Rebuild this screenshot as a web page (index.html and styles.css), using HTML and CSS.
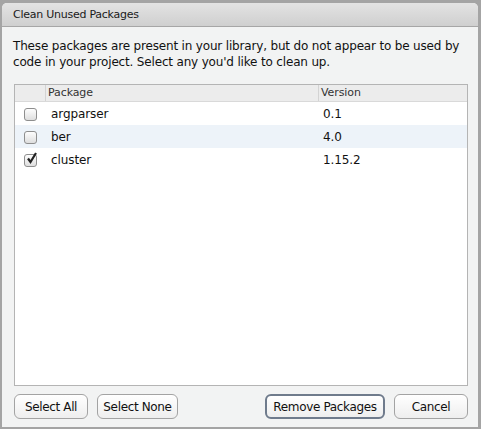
FILE: index.html
```html
<!DOCTYPE html>
<html>
<head>
<meta charset="utf-8">
<link rel="stylesheet" href="styles.css">
</head>
<body>
<div class="window">
  <div class="titlebar">Clean Unused Packages</div>
  <div class="content">
    <p class="intro">These packages are present in your library, but do not appear to be used by code in your project. Select any you'd like to clean up.</p>
    <div class="table">
      <div class="row head">
        <div class="cell chk"></div>
        <div class="cell name">Package</div>
        <div class="cell ver">Version</div>
      </div>
      <div class="row">
        <div class="cell chk"><span class="box"></span></div>
        <div class="cell name">argparser</div>
        <div class="cell ver">0.1</div>
      </div>
      <div class="row alt">
        <div class="cell chk"><span class="box"></span></div>
        <div class="cell name">ber</div>
        <div class="cell ver">4.0</div>
      </div>
      <div class="row">
        <div class="cell chk"><span class="box checked"><svg width="14" height="14" viewBox="0 0 14 14"><path d="M3 6.5 L5.5 10 L11 1" fill="none" stroke="#222" stroke-width="2.2"/></svg></span></div>
        <div class="cell name">cluster</div>
        <div class="cell ver">1.15.2</div>
      </div>
    </div>
    <div class="buttons">
      <div class="left">
        <button class="btn">Select All</button>
        <button class="btn">Select None</button>
      </div>
      <div class="right">
        <button class="btn default">Remove Packages</button>
        <button class="btn">Cancel</button>
      </div>
    </div>
  </div>
</div>
</body>
</html>
```
FILE: styles.css
```css
html, body {
  margin: 0;
  padding: 0;
}
body {
  background: #a4a4a4;
  width: 481px;
  height: 429px;
  overflow: hidden;
  font-family: "DejaVu Sans", sans-serif;
  color: #111;
}
.window {
  margin: 3px 3px 0 2px;
  width: 476px;
  height: 424px;
  background: #f2f3f3;
  border-radius: 5px 5px 0 0;
  display: flex;
  flex-direction: column;
  overflow: hidden;
}
.titlebar {
  height: 23px;
  border-bottom: 1px solid #a6a6a6;
  background: linear-gradient(#e3e3e3, #cfcfcf);
  font-size: 11px;
  letter-spacing: -0.25px;
  line-height: 23px;
  padding-left: 11px;
  color: #1a1a1a;
}
.content {
  flex: 1;
  display: flex;
  flex-direction: column;
  padding: 0 10px 0 12px;
}
.intro {
  margin: 11px 0 0 -1px;
  font-size: 12px;
  letter-spacing: -0.17px;
  line-height: 16px;
  color: #111;
}
.table {
  margin-top: 14px;
  height: 300px;
  border: 1px solid #b4b4b4;
  background: #fff;
}
.row {
  display: grid;
  grid-template-columns: 30px 273px 1fr;
  height: 23px;
  font-size: 12px;
  letter-spacing: -0.1px;
  align-items: center;
}
.row.alt {
  background: #edf3f9;
}
.row.head {
  height: 16px;
  background: #ececec;
  border-bottom: 1px solid #d9d9d9;
  font-size: 11px;
  color: #333;
}
.head .cell {
  height: 16px;
  line-height: 16px;
}
.head .cell.name {
  border-left: 1px solid #d3d3d3;
  padding-left: 2px;
}
.head .cell.ver {
  border-left: 1px solid #d3d3d3;
  padding-left: 2px;
}
.cell.name {
  padding-left: 6px;
}
.cell.ver {
  padding-left: 5px;
}
.cell.chk {
  display: flex;
  justify-content: center;
  padding-left: 0;
}
.box {
  width: 11px;
  height: 11px;
  border: 1px solid #8e8e8e;
  border-radius: 3px;
  background: linear-gradient(#fdfdfd, #dedede);
  position: relative;
  margin-top: 1px;
}
.box svg {
  position: absolute;
  left: 0px;
  top: -3px;
}
.buttons {
  display: flex;
  justify-content: space-between;
  margin-top: 8px;
}
.left, .right {
  display: flex;
  gap: 9px;
}
.btn {
  height: 25px;
  border: 1px solid #a3a3a3;
  border-radius: 6px;
  background: linear-gradient(#ffffff, #eeeeee);
  font-family: "DejaVu Sans", sans-serif;
  font-size: 12px;
  letter-spacing: -0.35px;
  white-space: nowrap;
  color: #111;
  padding: 0;
  margin: 0;
}
.btn.default {
  border: 2px solid #6f7b8c;
}
.left .btn:first-child { width: 74px; }
.left .btn:last-child { width: 81px; }
.right .btn.default { width: 120px; }
.right .btn:last-child { width: 74px; }
```
